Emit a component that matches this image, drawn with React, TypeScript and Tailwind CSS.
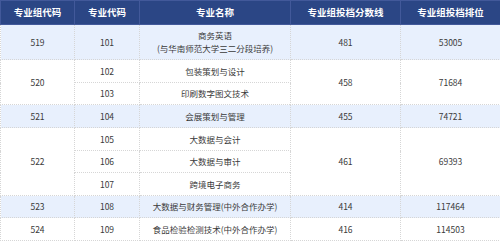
const rows: {
  group?: string;
  span?: number;
  code: string;
  name: string[];
  score?: string;
  rank?: string;
  hl: boolean;
  h: string;
}[] = [
  { group: '519', span: 1, code: '101', name: ['商务英语', '(与华南师范大学三二分段培养)'], score: '481', rank: '53005', hl: true, h: 'h-[35px]' },
  { group: '520', span: 2, code: '102', name: ['包装策划与设计'], score: '458', rank: '71684', hl: false, h: 'h-[23px]' },
  { code: '103', name: ['印刷数字图文技术'], hl: false, h: 'h-[22px]' },
  { group: '521', span: 1, code: '104', name: ['会展策划与管理'], score: '455', rank: '74721', hl: true, h: 'h-[23px]' },
  { group: '522', span: 3, code: '105', name: ['大数据与会计'], score: '461', rank: '69393', hl: false, h: 'h-[23px]' },
  { code: '106', name: ['大数据与审计'], hl: false, h: 'h-[22px]' },
  { code: '107', name: ['跨境电子商务'], hl: false, h: 'h-[23px]' },
  { group: '523', span: 1, code: '108', name: ['大数据与财务管理(中外合作办学)'], score: '414', rank: '117464', hl: true, h: 'h-[22px]' },
  { group: '524', span: 1, code: '109', name: ['食品检验检测技术(中外合作办学)'], score: '416', rank: '114503', hl: false, h: 'h-[23px]' },
];

const cell = 'border border-dotted border-[#d6d6d6] text-center align-middle p-0 whitespace-nowrap';

export default function App() {
  return (
    <div
      className="w-[500px] h-[241px] overflow-hidden bg-white text-[8.5px] leading-[13px] text-[#3a3a3a]"
      style={{ fontFamily: '"Microsoft YaHei", "Noto Sans CJK SC", "Noto Sans", sans-serif' }}
    >
      <table className="w-[500px] table-fixed border-collapse">
        <colgroup>
          <col className="w-[74px]" />
          <col className="w-[65px]" />
          <col className="w-[151px]" />
          <col className="w-[110px]" />
          <col className="w-[100px]" />
        </colgroup>
        <thead>
          <tr className="h-[24px] bg-[#2b4685] text-white text-[9.5px]">
            {['专业组代码', '专业代码', '专业名称', '专业组投档分数线', '专业组投档排位'].map((t) => (
              <th key={t} className="border border-[#42599a] text-center align-middle p-0 font-bold whitespace-nowrap">
                {t}
              </th>
            ))}
          </tr>
        </thead>
        <tbody>
          {rows.map((r) => (
            <tr key={r.code} className={`${r.h} ${r.hl ? 'bg-[#e8f0fd]' : 'bg-white'}`}>
              {r.group && (
                <td rowSpan={r.span} className={cell}>
                  {r.group}
                </td>
              )}
              <td className={cell}>{r.code}</td>
              <td className={cell}>
                {r.name.map((n) => (
                  <div key={n}>{n}</div>
                ))}
              </td>
              {r.group && (
                <td rowSpan={r.span} className={cell}>
                  {r.score}
                </td>
              )}
              {r.group && (
                <td rowSpan={r.span} className={cell}>
                  {r.rank}
                </td>
              )}
            </tr>
          ))}
        </tbody>
      </table>
    </div>
  );
}
